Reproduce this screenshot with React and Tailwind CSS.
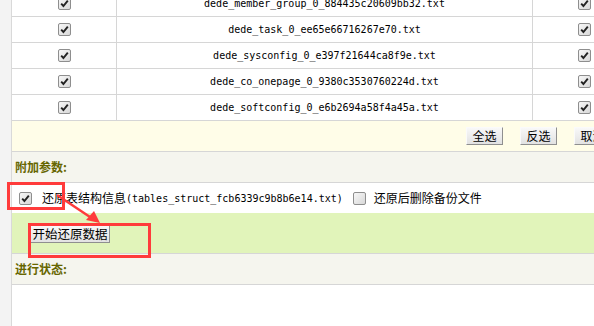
import React from "react";

const files = [
  "dede_member_group_0_884435c20609bb32.txt",
  "dede_task_0_ee65e66716267e70.txt",
  "dede_sysconfig_0_e397f21644ca8f9e.txt",
  "dede_co_onepage_0_9380c3530760224d.txt",
  "dede_softconfig_0_e6b2694a58f4a45a.txt",
];

const cjk = { fontFamily: '"SimSun","Noto Sans CJK SC",sans-serif' };
const mono = { fontFamily: '"DejaVu Sans Mono","Liberation Mono",monospace' };

function Box({ checked }) {
  return (
    <span className="inline-flex w-[13px] h-[13px] shrink-0 items-center justify-center rounded-[2px] border border-[#8e8e8e] bg-gradient-to-br from-[#f7f7f7] to-[#d8d8d8]">
      {checked && (
        <svg width="9" height="9" viewBox="0 0 9 9">
          <path d="M1.2 4.6 L3.4 7 L7.8 1.6" fill="none" stroke="#222" strokeWidth="1.9" />
        </svg>
      )}
    </span>
  );
}

function Btn({ children, className }) {
  return (
    <div
      className={
        "flex items-center justify-center h-[18px] text-black bg-gradient-to-b from-[#f8f8f8] to-[#e2e2e2] border border-t-[#fafafa] border-l-[#fafafa] border-r-[#8f8f8f] border-b-[#8f8f8f] whitespace-nowrap " +
        (className || "")
      }
      style={cjk}
    >
      {children}
    </div>
  );
}

export default function App() {
  return (
    <div className="relative w-[594px] h-[326px] overflow-hidden bg-white flex">
      <div className="w-[12px] shrink-0 bg-[#f3f3f3] border-r border-[#d9d9d9]" />
      <div className="w-[625px] shrink-0 flex flex-col mt-[-9px]">
        {files.map((f) => (
          <div
            key={f}
            className="grid grid-cols-[105px_416px_104px] h-[26px] border-b border-[#d6d6d6]"
          >
            <div className="flex items-center justify-center border-r border-[#d6d6d6]">
              <Box checked />
            </div>
            <div
              className="flex items-center justify-center border-r border-[#d6d6d6] text-[10px] text-black"
              style={mono}
            >
              {f}
            </div>
            <div className="flex items-center justify-start pl-[45px]">
              <Box checked />
            </div>
          </div>
        ))}
        <div className="h-[31px] border-b border-[#d6d6d6] bg-[#fffde8] flex items-center pl-[454px] gap-[17px]">
          <Btn className="w-[37px] text-[12px]">全选</Btn>
          <Btn className="w-[37px] text-[12px]">反选</Btn>
          <Btn className="w-[37px] text-[12px]">取消</Btn>
        </div>
        <div className="h-[31px] border-b border-[#d6d6d6] bg-[#f5f5ee] flex items-center pl-[3px]">
          <span className="text-[12px] font-bold text-[#666600]" style={cjk}>
            附加参数:
          </span>
        </div>
        <div className="h-[30px] bg-white flex items-center pl-[7px]">
          <Box checked />
          <span className="ml-[10px] text-[12px] text-black" style={cjk}>
            还原表结构信息
          </span>
          <span className="text-[10px] text-black" style={mono}>
            (tables_struct_fcb6339c9b8b6e14.txt)
          </span>
          <span className="ml-[10px] flex">
            <Box />
          </span>
          <span className="ml-[8px] text-[12px] text-black" style={cjk}>
            还原后删除备份文件
          </span>
        </div>
        <div className="h-[41px] border-b border-[#d6d6d6] bg-[#e1f4ba] pl-[18px] pt-[12px]">
          <Btn className="w-[80px] text-[12.5px]">开始还原数据</Btn>
        </div>
        <div className="h-[31px] border-b border-[#d6d6d6] bg-[#f5f5ee] flex items-center pl-[3px]">
          <span className="text-[12px] font-bold text-[#666600]" style={cjk}>
            进行状态:
          </span>
        </div>
        <div className="flex-1 bg-white" />
      </div>
      <svg className="absolute inset-0 pointer-events-none" width="594" height="326">
        <rect x="8.5" y="183.5" width="55" height="25" fill="none" stroke="#ff3b3b" strokeWidth="3" />
        <rect x="29.5" y="224.5" width="120" height="32" fill="none" stroke="#ff3b3b" strokeWidth="3" />
        <line x1="57" y1="195" x2="93" y2="219" stroke="#ff3b3b" strokeWidth="2.5" />
        <polygon points="100,223 86,220 94,211" fill="#ff3b3b" />
      </svg>
    </div>
  );
}
